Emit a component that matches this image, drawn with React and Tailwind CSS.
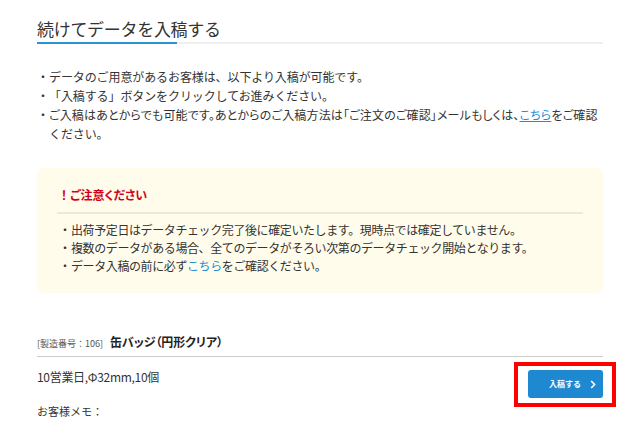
function Item({ children, className = "" }) {
  return (
    <li className="flex">
      <span className="w-[12px] shrink-0">・</span>
      <span className={className}>{children}</span>
    </li>
  );
}

export default function App() {
  const font = { fontFamily: '"Noto Sans CJK JP", "Noto Sans", sans-serif' };
  return (
    <div className="w-[640px] h-[435px] bg-white overflow-hidden text-[#333]" style={font}>
      <div className="mx-[37px] pt-[17px]">
        <h2 className="text-[17px] leading-[24px] font-normal text-[#333] tracking-[-0.3px]">続けてデータを入稿する</h2>
        <div className="flex mt-[1px]">
          <div className="w-[140px] h-[2px] bg-[#2a93d5]"></div>
          <div className="flex-1 h-[2px] bg-[#efefef]"></div>
        </div>

        <ul className="mt-[23px] text-[12px] leading-[19px]">
          <Item className="tracking-[-0.1px]">データのご用意があるお客様は、以下より入稿が可能です。</Item>
          <Item className="tracking-[-0.1px]">「入稿する」ボタンをクリックしてお進みください。</Item>
          <li className="flex">
            <span className="w-[12px] shrink-0">・</span>
            <div className="flex flex-col">
              <span className="whitespace-nowrap [font-feature-settings:'palt'] tracking-[0.15px]">
                ご入稿はあとからでも可能です。あとからのご入稿方法は「ご注文のご確認」メールもしくは、<span className="text-[#1a8fd6] underline">こちら</span>をご確認
              </span>
              <span className="tracking-[-0.1px]">ください。</span>
            </div>
          </li>
        </ul>

        <div className="mt-[25px] bg-[#fffcec] rounded-[6px] px-[20px] pt-[18px] pb-[18px]">
          <div className="text-[12px] leading-[18px] font-bold text-[#d0021b] pl-[1px] pb-[8px] border-b-2 border-[#ebe8dc]">
            <span>！</span><span className="[font-feature-settings:'palt']">ご注意ください</span>
          </div>
          <ul className="mt-[7px] text-[12px] leading-[18px] pl-[2px] tracking-[-0.4px]">
            <Item>出荷予定日はデータチェック完了後に確定いたします。現時点では確定していません。</Item>
            <Item>複数のデータがある場合、全てのデータがそろい次第のデータチェック開始となります。</Item>
            <Item>データ入稿の前に必ず<span className="text-[#1a8fd6]">こちら</span>をご確認ください。</Item>
          </ul>
        </div>

        <div className="mt-[39px] flex items-baseline pb-[2px] border-b border-[#cccccc] leading-[20px]">
          <span className="text-[9px] text-[#555]">[製造番号：106]</span>
          <span className="ml-[7px] text-[12px] font-bold text-[#222] tracking-[-0.1px] [font-feature-settings:'palt']">缶バッジ（円形クリア）</span>
        </div>

        <div className="flex justify-between items-start">
          <div className="mt-[10px] text-[12px] leading-[20px] text-[#333] tracking-[-0.3px]">10営業日,Φ32mm,10個</div>
          <div className="relative mt-[13px]">
            <button className="w-[75px] h-[28px] bg-[#1e88d0] rounded-[3px] text-white text-[8px] font-bold flex items-center pl-[21px] gap-[9px]">
              <span>入稿する</span>
              <svg width="6" height="9" viewBox="0 0 6 9" fill="none">
                <path d="M1.2 1 L4.6 4.5 L1.2 8" stroke="white" strokeWidth="1.6" />
              </svg>
            </button>
            <div className="absolute -left-[14px] -right-[13px] -top-[8px] -bottom-[9px] border-4 border-[#ff0000] pointer-events-none"></div>
          </div>
        </div>

        <div className="mt-[5px] text-[11px] leading-[16px] text-[#333]">お客様メモ：</div>
      </div>
    </div>
  );
}
